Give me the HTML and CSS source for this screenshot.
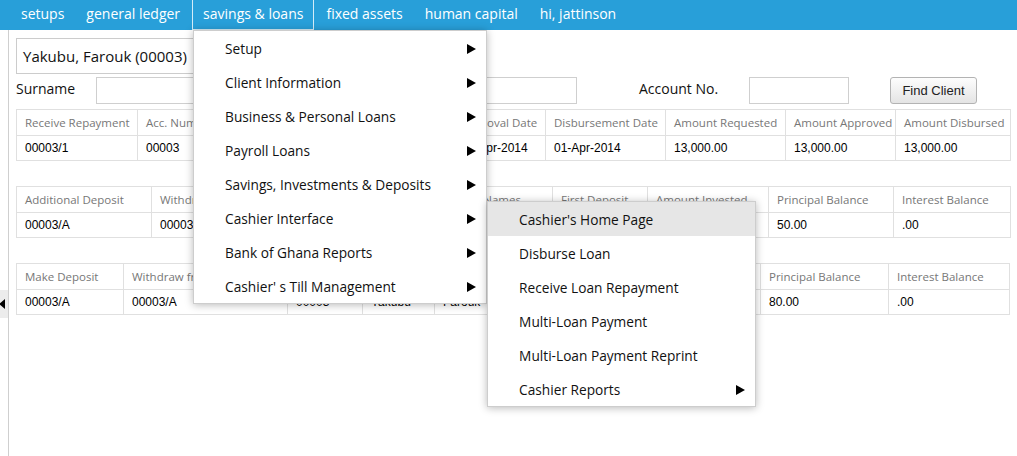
FILE: index.html
```html
<!DOCTYPE html>
<html>
<head>
<meta charset="utf-8">
<link rel="stylesheet" href="styles.css">
</head>
<body>
<nav class="topbar">
  <div class="nav-item">setups</div>
  <div class="nav-item">general ledger</div>
  <div class="nav-item active">savings &amp; loans
    <ul class="menu">
      <li class="menu-item"><span>Setup</span><i class="arrow"></i></li>
      <li class="menu-item"><span>Client Information</span><i class="arrow"></i></li>
      <li class="menu-item"><span>Business &amp; Personal Loans</span><i class="arrow"></i></li>
      <li class="menu-item"><span>Payroll Loans</span><i class="arrow"></i></li>
      <li class="menu-item"><span>Savings, Investments &amp; Deposits</span><i class="arrow"></i></li>
      <li class="menu-item open"><span>Cashier Interface</span><i class="arrow"></i>
        <ul class="menu submenu">
          <li class="menu-item hover"><span>Cashier's Home Page</span></li>
          <li class="menu-item"><span>Disburse Loan</span></li>
          <li class="menu-item"><span>Receive Loan Repayment</span></li>
          <li class="menu-item"><span>Multi-Loan Payment</span></li>
          <li class="menu-item"><span>Multi-Loan Payment Reprint</span></li>
          <li class="menu-item"><span>Cashier Reports</span><i class="arrow"></i></li>
        </ul>
      </li>
      <li class="menu-item"><span>Bank of Ghana Reports</span><i class="arrow"></i></li>
      <li class="menu-item"><span>Cashier' s Till Management</span><i class="arrow"></i></li>
    </ul>
  </div>
  <div class="nav-item">fixed assets</div>
  <div class="nav-item">human capital</div>
  <div class="nav-item">hi, jattinson</div>
</nav>

<div class="layout">
  <aside class="rail">
    <div class="rail-toggle"></div>
  </aside>
  <main class="content">
    <div class="client-box">Yakubu, Farouk (00003)</div>

    <div class="search">
      <span class="lbl lbl-surname">Surname</span>
      <input class="field field-name" type="text">
      <span class="lbl lbl-other">Other Names</span>
      <input class="field field-name" type="text">
      <span class="lbl lbl-acc">Account No.</span>
      <input class="field field-acc" type="text">
      <button class="find-btn">Find Client</button>
    </div>

    <div class="grid grid-loans">
      <div class="th">Receive Repayment</div>
      <div class="th">Acc. Number</div>
      <div class="th">Surname</div>
      <div class="th">Other Names</div>
      <div class="th">Loan Type</div>
      <div class="th">Approval Date</div>
      <div class="th">Disbursement Date</div>
      <div class="th">Amount Requested</div>
      <div class="th">Amount Approved</div>
      <div class="th">Amount Disbursed</div>
      <div class="td">00003/1</div>
      <div class="td">00003</div>
      <div class="td">Yakubu</div>
      <div class="td">Farouk</div>
      <div class="td">Personal</div>
      <div class="td">01-Apr-2014</div>
      <div class="td">01-Apr-2014</div>
      <div class="td">13,000.00</div>
      <div class="td">13,000.00</div>
      <div class="td">13,000.00</div>
    </div>

    <div class="grid grid-invest">
      <div class="th">Additional Deposit</div>
      <div class="th">Withdraw</div>
      <div class="th">Acc. Number</div>
      <div class="th">Surname</div>
      <div class="th">Other Names</div>
      <div class="th">First Deposit</div>
      <div class="th">Amount Invested</div>
      <div class="th">Principal Balance</div>
      <div class="th">Interest Balance</div>
      <div class="td">00003/A</div>
      <div class="td">00003/A</div>
      <div class="td">00003</div>
      <div class="td">Yakubu</div>
      <div class="td">Farouk</div>
      <div class="td">50.00</div>
      <div class="td">50.00</div>
      <div class="td">50.00</div>
      <div class="td">.00</div>
    </div>

    <div class="grid grid-deposit">
      <div class="th">Make Deposit</div>
      <div class="th">Withdraw from Savings</div>
      <div class="th">Acc. Number</div>
      <div class="th">Surname</div>
      <div class="th">Other Names</div>
      <div class="th">First Deposit</div>
      <div class="th">Amount Saved</div>
      <div class="th">Principal Balance</div>
      <div class="th">Interest Balance</div>
      <div class="td">00003/A</div>
      <div class="td">00003/A</div>
      <div class="td">00003</div>
      <div class="td">Yakubu</div>
      <div class="td">Farouk</div>
      <div class="td">80.00</div>
      <div class="td">80.00</div>
      <div class="td">80.00</div>
      <div class="td">.00</div>
    </div>
  </main>
</div>
</body>
</html>
```

FILE: styles.css
```css
* { box-sizing: border-box; }
html, body { margin: 0; padding: 0; }
body {
  width: 1017px;
  height: 456px;
  overflow: hidden;
  background: #fff;
  font-family: "Open Sans", "Noto Sans", sans-serif;
  color: #111;
}

/* top navigation */
.topbar {
  position: relative;
  z-index: 10;
  display: flex;
  height: 30px;
  padding-left: 10px;
  background: #289fd9;
}
.nav-item {
  position: relative;
  height: 30px;
  padding: 0 10px;
  border: 1px solid transparent;
  border-top: 0;
  color: #fff;
  font-size: 14px;
  line-height: 27px;
  white-space: nowrap;
}
.nav-item.active { border-color: #d4ecf8; margin: 0 1px; }

/* dropdown menus */
.menu {
  position: absolute;
  left: 0;
  top: 30px;
  width: 294px;
  margin: 0;
  padding: 0;
  list-style: none;
  background: #fff;
  border: 1px solid #cdcdcd;
  box-shadow: 0 1px 8px rgba(0, 0, 0, 0.28);
  color: #111;
  line-height: normal;
}
.menu-item {
  position: relative;
  display: flex;
  align-items: center;
  justify-content: space-between;
  height: 34px;
  padding: 1px 10px 0 31px;
  font-size: 13.7px;
  white-space: nowrap;
}
.menu-item.hover { background: #e6e6e6; }
.arrow {
  width: 0;
  height: 0;
  border-left: 9px solid #000;
  border-top: 5px solid transparent;
  border-bottom: 5px solid transparent;
}
.submenu {
  left: calc(100% + 1px);
  top: 0;
  width: 269px;
}

/* page layout */
.layout {
  display: flex;
  height: 426px;
}
.rail {
  flex: 0 0 9px;
  display: flex;
  flex-direction: column;
  border-right: 1px solid #cfcfcf;
}
.rail-toggle {
  display: flex;
  align-items: center;
  height: 28px;
  margin-top: 260px;
  background: #ececec;
}
.rail-toggle::before {
  content: "";
  margin-left: -1px;
  border-right: 6px solid #000;
  border-top: 5px solid transparent;
  border-bottom: 5px solid transparent;
}
.content {
  flex: 1;
  padding: 8px 0 0 7px;
}

.client-box {
  display: flex;
  align-items: center;
  width: 400px;
  height: 36px;
  padding-left: 6px;
  border: 1px solid #cccccc;
  font-size: 15px;
  color: #111;
}

/* search row */
.search {
  display: flex;
  align-items: center;
  height: 27px;
  margin-top: 3px;
  font-size: 14px;
}
.lbl { flex: none; color: #111; padding-bottom: 4px; }
.lbl-surname { width: 80px; }
.lbl-other { width: 121px; padding-left: 20px; }
.lbl-acc { width: 110px; margin-left: 62px; }
.field {
  flex: none;
  height: 27px;
  margin: 0;
  padding: 0 4px;
  border: 1px solid #cfcfcf;
  background: #fff;
  outline: none;
}
.field-name { width: 180px; }
.field-acc { width: 100px; }
.find-btn {
  flex: none;
  width: 87px;
  height: 27px;
  margin: 0 0 0 41px;
  padding: 0;
  border: 1px solid #b3b3b3;
  border-radius: 3px;
  background: linear-gradient(#fdfdfd, #e4e4e4);
  font-family: "Liberation Sans", Arial, sans-serif;
  font-size: 13px;
  color: #222;
}

/* data grids */
.grid {
  display: grid;
  width: max-content;
  grid-template-rows: 26px 25px;
  border-top: 1px solid #e0e0e0;
  border-left: 1px solid #e0e0e0;
  margin-top: 25px;
}
.grid-loans {
  margin-top: 5px;
  grid-template-columns: 121px 75px 88px 80px 72px 93px 120px 120px 110px 115px;
}
.grid-invest {
  grid-template-columns: 135px 136px 75px 78px 112px 95px 121px 125px 117px;
}
.grid-deposit {
  grid-template-columns: 107px 164px 75px 72px 116px 100px 110px 128px 121px;
}
.th, .td {
  display: flex;
  align-items: center;
  padding-left: 8px;
  border-right: 1px solid #e0e0e0;
  border-bottom: 1px solid #e0e0e0;
  white-space: nowrap;
  overflow: hidden;
}
.th {
  font-size: 11.5px;
  color: #777;
}
.td {
  font-family: "Liberation Sans", Arial, sans-serif;
  font-size: 12px;
  color: #000;
}
```
